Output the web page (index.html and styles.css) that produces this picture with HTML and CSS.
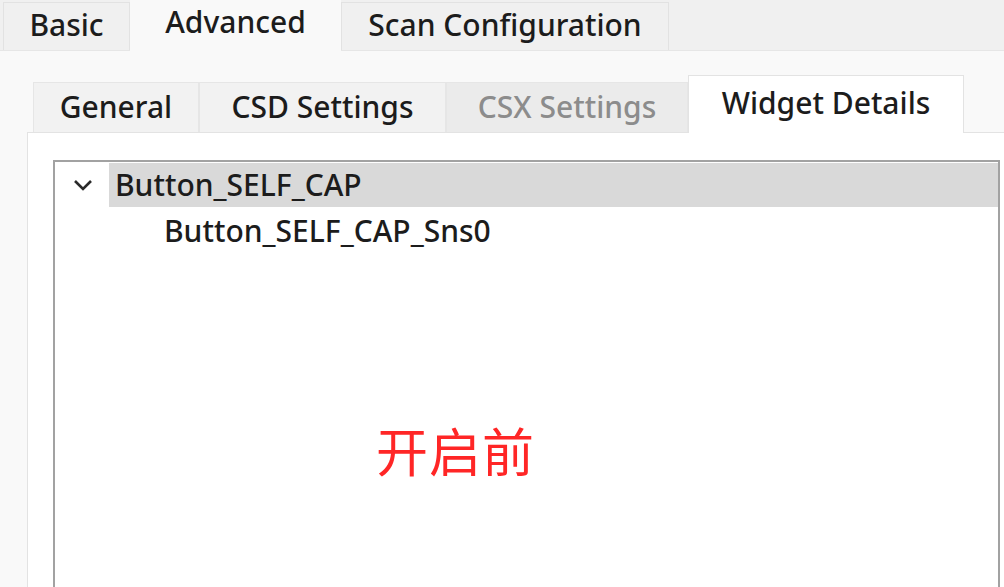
FILE: index.html
```html
<!DOCTYPE html>
<html lang="en">
<head>
  <meta charset="UTF-8" />
  <title>CapSense Advanced</title>
  <link rel="stylesheet" href="styles.css">
</head>
<body>
  <div class="tabs top-tabs">
    <div class="tab basic">Basic</div>
    <div class="tab advanced active">Advanced</div>
    <div class="tab scan">Scan Configuration</div>
  </div>

  <div class="outer-panel">
    <div class="tabs sub-tabs">
      <div class="tab general">General</div>
      <div class="tab csd">CSD Settings</div>
      <div class="tab csx disabled">CSX Settings</div>
      <div class="tab widget active">Widget Details</div>
    </div>

    <div class="inner-panel">
      <div class="tree">
        <div class="tree-row selected">
          <span class="chevron">
            <svg width="20" height="14" viewBox="0 0 20 14">
              <polyline points="2,3 10,11 18,3" fill="none" stroke="#2a2a2a" stroke-width="2.6" />
            </svg>
          </span>
          <span class="label">Button_SELF_CAP</span>
        </div>
        <div class="tree-row child">
          <span class="label">Button_SELF_CAP_Sns0</span>
        </div>
        <div class="note">开启前</div>
      </div>
    </div>
  </div>
</body>
</html>
```

FILE: styles.css
```css
html, body {
  margin: 0;
  padding: 0;
  height: 100%;
  overflow: hidden;
}
body {
  background-color: #f0f0f0;
  font-family: "Noto Sans", "Open Sans", sans-serif;
  font-size: 30px;
  font-weight: 500;
  color: #1c1c1c;
  width: 1004px;
}
.tabs {
  display: flex;
  align-items: flex-end;
}
.tab {
  box-sizing: border-box;
  display: flex;
  align-items: center;
  justify-content: center;
  background-color: #f0f0f0;
  border: 1px solid #e2e2e2;
  border-bottom: none;
  white-space: nowrap;
}
.top-tabs {
  height: 50px;
  padding-left: 3px;
}
.top-tabs .tab {
  height: 48px;
  padding-bottom: 4px;
}
.top-tabs .basic { width: 127px; }
.top-tabs .advanced { width: 211px; }
.top-tabs .scan { width: 328px; }
.top-tabs .tab.active {
  height: 52px;
  margin-bottom: -2px;
  padding-bottom: 10px;
  background-color: #f9f9f9;
  border-color: #f9f9f9;
  position: relative;
}

.outer-panel {
  background-color: #f9f9f9;
  border-top: 1px solid #e6e6e6;
  padding: 25px 0 0 27px;
  height: 600px;
}
.sub-tabs {
  height: 56px;
  padding-left: 6px;
}
.sub-tabs .tab {
  height: 50px;
  padding-bottom: 2px;
  background-color: #f2f2f2;
  border-color: #e6e6e6;
}
.sub-tabs .general { width: 166px; }
.sub-tabs .csd { width: 247px; }
.sub-tabs .csx { width: 242px; }
.sub-tabs .widget { width: 276px; }
.sub-tabs .disabled {
  background-color: #ebebeb;
  color: #8c8c8c;
}
.sub-tabs .tab.active {
  height: 58px;
  margin-bottom: -1px;
  padding-bottom: 4px;
  background-color: #ffffff;
  border-color: #e3e3e3;
  position: relative;
}

.inner-panel {
  background-color: #ffffff;
  border: 1px solid #e3e3e3;
  border-right: none;
  padding: 27px 0 0 25px;
  height: 500px;
}
.tree {
  position: relative;
  width: 947px;
  height: 520px;
  border: 2px solid #a2a2a2;
  border-bottom: none;
  box-sizing: border-box;
  padding-top: 1px;
}
.tree-row {
  display: flex;
  align-items: center;
  height: 44px;
}
.tree-row .chevron {
  width: 52px;
  display: flex;
  justify-content: center;
  padding-left: 2px;
  background-color: #ffffff;
  align-self: stretch;
  align-items: center;
}
.tree-row.selected {
  background-color: #d9d9d9;
}
.tree-row.selected .label {
  padding-left: 6px;
  margin-top: -2px;
}
.tree-row.child {
  padding-left: 109px;
  height: 46px;
}
.note {
  position: absolute;
  left: 321px;
  top: 250px;
  font-family: "Noto Sans CJK SC", sans-serif;
  font-size: 52px;
  font-weight: 400;
  color: #ff2626;
  letter-spacing: 1px;
}
```
